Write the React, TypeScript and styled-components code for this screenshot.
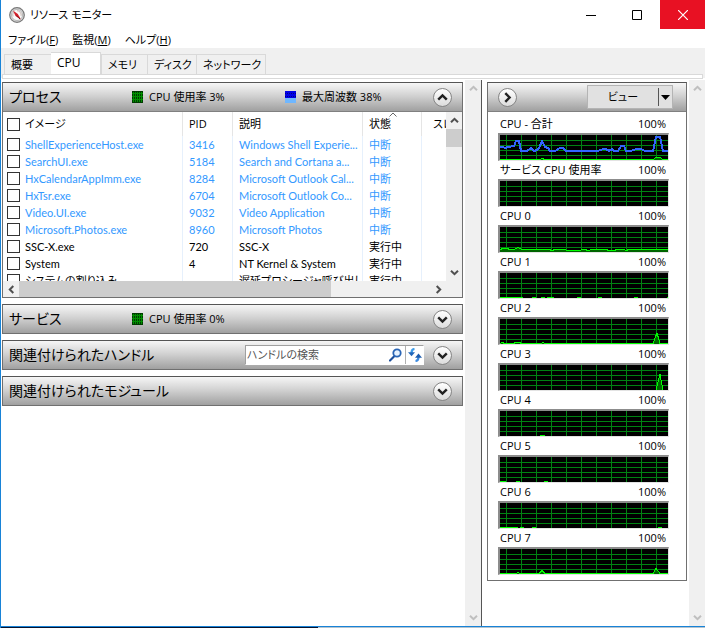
import React from 'react';
import styled, { createGlobalStyle } from 'styled-components';

const GlobalStyle = createGlobalStyle`
  *, *::before, *::after { box-sizing: border-box; }
  body {
    margin: 0;
    background: #ffffff;
    color: #000000;
    font: 11px/16px "Open Sans", "Noto Sans CJK JP", sans-serif;
    font-feature-settings: "palt";
  }
  button, input {
    margin: 0;
    padding: 0;
    font: inherit;
    color: inherit;
    font-feature-settings: inherit;
  }
  h1, h2, p { margin: 0; font: inherit; }
  svg { display: block; flex: none; }
`;

/* Window frame */

const Window = styled.div`
  display: flex;
  flex-direction: column;
  min-height: 100vh;
  border-left: 1px solid #1883d7;
`;

const TitleBar = styled.header`
  display: flex;
  align-items: flex-start;
  gap: 1px;
  height: 31px;
  padding-left: 8px;
`;

const WindowTitle = styled.h1`
  display: flex;
  flex: 1;
  align-items: center;
  gap: 5px;
  height: 29px;
`;

const CaptionButton = styled.button<{ $danger?: boolean }>`
  display: grid;
  place-items: center;
  width: 45px;
  height: 29px;
  border: 0;
  color: ${(p) => (p.$danger ? '#ffffff' : '#000000')};
  background: ${(p) => (p.$danger ? '#e81123' : 'transparent')};
`;

const MenuBar = styled.nav`
  display: flex;
  gap: 14px;
  height: 17px;
  padding-left: 7px;
`;

const MenuButton = styled.button`
  border: 0;
  background: transparent;
  line-height: 17px;
  white-space: nowrap;
`;

const TabStrip = styled.div`
  display: flex;
  align-items: flex-end;
  height: 27px;
  padding: 0 2px 0 3px;
  background: #f0f0f0;
`;

const Tab = styled.button<{ $width: number; $active?: boolean }>`
  width: ${(p) => p.$width}px;
  height: ${(p) => (p.$active ? 23 : 21)}px;
  padding: 0 0 ${(p) => (p.$active ? 2 : 0)}px 6px;
  border: 1px solid #d9d9d9;
  border-right-width: ${(p) => (p.$active ? 1 : 0)}px;
  border-bottom: 0;
  border-left-width: ${(p) => (p.$active ? 0 : 1)}px;
  background: ${(p) => (p.$active ? '#ffffff' : '#f0f0f0')};
  font-size: ${(p) => (p.$active ? 12 : 11)}px;
  line-height: 20px;
  text-align: left;
  white-space: nowrap;
  &:last-child { border-right-width: 1px; }
`;

const TabPageEdge = styled.div`
  height: 4px;
  margin: -1px 0 0;
  padding: 0 2px 0 1px;
  background: #f0f0f0;
  &::before {
    content: "";
    display: block;
    height: 5px;
    border: 1px solid #d9d9d9;
    background: #ffffff;
  }
`;

const Workspace = styled.main`
  display: flex;
  flex: 1;
  padding-top: 2px;
`;

const Details = styled.div`
  display: flex;
  flex: 1;
  flex-direction: column;
  gap: 6px;
  min-width: 0;
  padding: 2px 2px 0 1px;
`;

const Sidebar = styled.aside`
  display: flex;
  flex: none;
  width: 224px;
  border-left: 1px solid #555555;
`;

const SidebarBody = styled.div`
  flex: 1;
  padding: 2px 2px 0 5px;
`;

const BottomEdge = styled.footer`
  height: 2px;
  border-top: 1px solid #1883d7;
  background: linear-gradient(90deg, #06122e 45%, #b4c4d0 45%);
`;

/* Scroll bars */

const ScrollTrack = styled.div<{ $horizontal?: boolean }>`
  display: flex;
  flex: none;
  flex-direction: ${(p) => (p.$horizontal ? 'row' : 'column')};
  ${(p) => (p.$horizontal ? 'height: 16px;' : 'width: 16px;')}
  background: #f0f0f0;
`;

const ScrollButton = styled.button<{ $muted?: boolean }>`
  display: grid;
  flex: none;
  place-items: center;
  width: 16px;
  height: 17px;
  border: 0;
  background: transparent;
  color: ${(p) => (p.$muted ? '#bfbfbf' : '#505050')};
`;

const ScrollRange = styled.div<{ $horizontal?: boolean }>`
  display: flex;
  flex: 1;
  flex-direction: ${(p) => (p.$horizontal ? 'row' : 'column')};
`;

const ScrollThumb = styled.div<{ $share: string }>`
  flex: 0 0 ${(p) => p.$share};
  background: #cdcdcd;
`;

/* Sections */

const Section = styled.section`
  flex: none;
  border: 1px solid #707070;
  border-top-color: #555555;
`;

const SectionHeader = styled.div`
  display: flex;
  align-items: center;
  height: 28px;
  padding: 0 10px 0 6px;
  background: linear-gradient(#f6f6f6, #d2d2d2 45%, #a0a0a0);
`;

const SectionTitle = styled.h2`
  min-width: 123px;
  font-size: 14px;
  line-height: 20px;
  white-space: nowrap;
`;

const Meter = styled.span`
  display: flex;
  flex: none;
  align-items: center;
  gap: 6px;
  width: 153px;
  white-space: nowrap;
  &:nth-of-type(2) { width: auto; }
`;

const Spacer = styled.span`
  flex: 1;
`;

const RoundButton = styled.button`
  display: grid;
  flex: none;
  place-items: center;
  width: 19px;
  height: 19px;
  border: 1px solid #858585;
  border-radius: 50%;
  background: linear-gradient(#ffffff, #dcdcdc);
  color: #222222;
`;

const SearchBox = styled.div`
  display: flex;
  width: 179px;
  height: 20px;
  margin-right: 9px;
  border: 1px solid #a0a0a0;
  border-right-color: #ffffff;
  border-bottom-color: #ffffff;
  background: #ffffff;
`;

const SearchInput = styled.input`
  flex: 1;
  min-width: 0;
  padding-left: 1px;
  border: 0;
  outline: 0;
  background: transparent;
  &::placeholder { color: #555555; opacity: 1; }
`;

const SearchButton = styled.button<{ $divided?: boolean }>`
  display: grid;
  flex: none;
  place-items: center;
  width: ${(p) => (p.$divided ? 18 : 20)}px;
  border: 0;
  border-left: ${(p) => (p.$divided ? '1px solid #b0b0b0' : '0')};
  background: transparent;
`;

/* Process table */

const TableFrame = styled.div`
  border-top: 1px solid #808080;
  background: #ffffff;
`;

const TableArea = styled.div`
  display: flex;
  height: 169px;
`;

const TableClip = styled.div`
  flex: 1;
  min-width: 0;
  overflow: hidden;
`;

const Table = styled.table`
  width: 500px;
  border-collapse: separate;
  border-spacing: 0;
  table-layout: fixed;
`;

const Column = styled.col<{ $width?: number }>`
  ${(p) => (p.$width ? `width: ${p.$width}px;` : '')}
`;

const HeadCell = styled.th`
  position: relative;
  height: 24px;
  padding: 0 6px;
  border-right: 1px solid #e5e5e5;
  font-weight: 400;
  text-align: left;
  white-space: nowrap;
  &:first-child { padding-left: 4px; }
  &:last-child { padding-left: 11px; }
`;

const SortMark = styled.span`
  position: absolute;
  top: 0;
  left: 26px;
`;

const BodyRow = styled.tr<{ $suspended: boolean }>`
  color: ${(p) => (p.$suspended ? '#3399ff' : '#000000')};
`;

const Cell = styled.td`
  height: 17px;
  padding: 0 6px;
  border-right: 1px solid #e6f0fc;
  font-family: Lato, "Noto Sans CJK JP", sans-serif;
  white-space: nowrap;
  &:first-child { padding-left: 4px; }
`;

const CheckLabel = styled.label`
  display: flex;
  align-items: center;
  gap: 5px;
  height: 16px;
`;

const CheckBox = styled.input`
  flex: none;
  width: 13px;
  height: 13px;
  border: 1px solid #333333;
  background: #ffffff;
  appearance: none;
`;

/* Graph panel */

const ViewSplit = styled.div`
  display: flex;
  align-items: center;
  width: 86px;
  height: 24px;
  margin-right: 3px;
  border: 1px solid #b4b4b4;
  background: #e1e1e1;
`;

const ViewButton = styled.button`
  flex: 1;
  border: 0;
  background: transparent;
`;

const ViewMenuButton = styled.button`
  display: grid;
  place-items: center;
  width: 14px;
  height: 18px;
  border: 0;
  border-left: 1px solid #555555;
  background: transparent;
`;

const GraphToggleSlot = styled.span`
  flex: 1;
  padding-left: 4px;
`;

const GraphList = styled.div`
  padding: 3px 17px 5px 10px;
  border-top: 1px solid #808080;
  background: #ffffff;
`;

const GraphCaption = styled.div`
  display: flex;
  justify-content: space-between;
  padding: 0 3px 0 2px;
  line-height: 18px;
  white-space: nowrap;
`;

const GraphFrame = styled.div`
  height: 28px;
  border: 2px solid #8c8c8c;
  border-right: 1px solid #e3e3e3;
  border-bottom: 1px solid #e3e3e3;
  background: #000000;
  svg { width: 100%; height: 100%; }
`;

/* Drawings */

type Direction = 'up' | 'down' | 'left' | 'right';
const turns: Record<Direction, number> = { up: 0, right: 90, down: 180, left: 270 };

const Chevron = ({ to, size = 9, weight = 2 }: { to: Direction; size?: number; weight?: number }) => (
  <svg width={size} height={size} viewBox="0 0 9 9" fill="none" stroke="currentColor" strokeWidth={weight}>
    <path d="M1 6.3 4.5 2.8 8 6.3" transform={`rotate(${turns[to]} 4.5 4.5)`} />
  </svg>
);

const GaugeIcon = () => (
  <svg width="16" height="16" viewBox="0 0 16 16" fill="none">
    <circle cx="8" cy="8" r="7.3" fill="#d9d9d9" stroke="#777777" strokeWidth="1.2" />
    <circle cx="8" cy="8" r="5.5" fill="#fbfbfb" stroke="#aaaaaa" strokeWidth=".8" />
    <path d="M4 9.5A4.3 4.3 0 0 1 5 5M8 3.7a4.3 4.3 0 0 1 4.1 5.1" stroke="#b9a6a0" strokeWidth=".8" />
    <path d="m4 3.6 4.800 3.400L11.800 12 6.500 9Z" fill="#d3202a" />
    <path d="m7.4 8.8 3.8 3.3" stroke="#7c1015" />
  </svg>
);

const MinimizeIcon = () => (
  <svg width="10" height="10" viewBox="0 0 10 10"><path d="M0 5.5h10" stroke="currentColor" /></svg>
);
const MaximizeIcon = () => (
  <svg width="10" height="10" viewBox="0 0 10 10"><path d="M.5.5h9v9h-9z" fill="none" stroke="currentColor" /></svg>
);
const CloseIcon = () => (
  <svg width="10" height="10" viewBox="0 0 10 10"><path d="m0 0 10 10M10 0 0 10" stroke="currentColor" strokeWidth="1.2" /></svg>
);

const UsageSwatch = () => (
  <svg width="11" height="12" viewBox="0 0 11 12" shapeRendering="crispEdges">
    <path fill="#003c00" d="M0 0h11v12H0z" />
    <path
      stroke="#009000"
      d="M1.5 1v10M3.5 1v10M5.5 1v10M7.5 1v10M9.5 1v10M0 2.5h11M0 5.5h11M0 8.5h11"
    />
  </svg>
);

const FrequencySwatch = () => (
  <svg width="11" height="12" viewBox="0 0 11 12" shapeRendering="crispEdges">
    <path fill="#0000e6" d="M0 0h11v8H0z" />
    <path fill="#6fb7ff" d="M0 7h11v5H0z" />
    <path stroke="#000080" strokeDasharray="1 1" d="M0 2.5h11M0 5.5h11" />
  </svg>
);

const SearchIcon = () => (
  <svg width="13" height="14" viewBox="0 0 13 14" fill="none">
    <path d="m5 8.5-4 4" stroke="#1c4f9c" strokeWidth="2.2" strokeLinecap="round" />
    <circle cx="8" cy="5" r="3.7" fill="#e6f2ff" stroke="#2a65b5" strokeWidth="1.8" />
  </svg>
);

const RefreshIcon = () => (
  <svg width="14" height="14" viewBox="0 0 14 14" fill="none">
    <path d="M6.500 1C4.200 1.200 3.500 2.500 3.500 5" stroke="#3d9be8" strokeWidth="2.200" />
    <path d="M0 4.200h7L3.500 8.200Z" fill="#2166ba" />
    <path d="M7.500 13c2.300-.2 3-1.500 3-4" stroke="#3d8be0" strokeWidth="2.200" />
    <path d="M7 9.800h7L10.500 5.600Z" fill="#1d5cae" />
  </svg>
);

const DropIcon = () => (
  <svg width="9" height="5" viewBox="0 0 9 5"><path d="M0 0h9L4.500 5Z" fill="#000000" /></svg>
);

const SortIcon = () => (
  <svg width="8" height="5" viewBox="0 0 8 5"><path d="m.5 4.500 3.500-3.500 3.500 3.500" fill="none" stroke="#666666" /></svg>
);

/* Data */

const processes = [
  ['ShellExperienceHost.exe', '3416', 'Windows Shell Experie...', '中断'],
  ['SearchUI.exe', '5184', 'Search and Cortana a...', '中断'],
  ['HxCalendarAppImm.exe', '8284', 'Microsoft Outlook Cal...', '中断'],
  ['HxTsr.exe', '6704', 'Microsoft Outlook Co...', '中断'],
  ['Video.UI.exe', '9032', 'Video Application', '中断'],
  ['Microsoft.Photos.exe', '8960', 'Microsoft Photos', '中断'],
  ['SSC-X.exe', '720', 'SSC-X', '実行中'],
  ['System', '4', 'NT Kernel & System', '実行中'],
  ['システムの割り込み', '-', '遅延プロシージャ呼び出し', '実行中'],
];

const idle = '0,25.500 168,25.500';

const graphs: { name: string; usage: string; frequency?: string }[] = [
  {
    name: 'CPU - 合計',
    usage: '0,24.500 40,24.500 42,23.500 45,24.500 153,24.500 156,22.500 160,22.500 163,24.500 168,24.500',
    frequency:
      '0,12 3,12 5,13 8,12 14,11 16,6 19,6 21,16 27,16 31,13 34,16 37,15 39,13 42,6 45,12 48,13 50,16 55,16 60,13 63,13 66,16 98,16 103,14 106,14 109,16 112,14 114,16 118,16 121,11 124,11 126,16 130,16 137,14 141,14 145,16 153,16 156,2 160,2 163,16 168,16',
  },
  { name: 'サービス CPU 使用率', usage: idle },
  {
    name: 'CPU 0',
    usage:
      '0,22.500 3,21.500 8,21.500 9,22.500 14,22.500 18,20.500 22,22.500 49,22.500 52,23.500 55,22.500 65,22.500 67,23.500 80,23.500 82,22.500 85,22.500 88,23.500 92,22.500 106,22.500 109,23.500 114,23.500 117,22.500 124,22.500 126,23.500 129,22.500 168,22.500',
  },
  { name: 'CPU 1', usage: '0,24.500 22,24.500 24,25.500 32,25.500 33,24.500 35,24.500 36,25.500 41,25.500 42,24.500 44,24.500 45,25.500 47,25.500 48,24.500 53,24.500 54,25.500 77,25.500 78,24.500 80,24.500 81,25.500 98,25.500 99,24.500 101,24.500 102,25.500 134,25.500 135,24.500 137,24.500 138,25.500 167,25.500 168,24.500' },
  { name: 'CPU 2', usage: '0,24.500 2,23.500 5,24.500 14,24.500 15,23.500 20,23.500 21,24.500 41,24.500 43,23.500 45,24.500 153,24.500 157,14 160,24.500 168,24.500' },
  { name: 'CPU 3', usage: '0,25.500 156,25.500 160,9 163,25.500 168,25.500' },
  { name: 'CPU 4', usage: '0,25.500 40,25.500 41,24.500 44,24.500 45,25.500 168,25.500' },
  { name: 'CPU 5', usage: '0,24.500 5,24.500 6,25.500 16,25.500 17,24.500 19,24.500 20,25.500 44,25.500 45,24.500 47,24.500 48,25.500 168,25.500' },
  { name: 'CPU 6', usage: '0,24.500 17,24.500 18,25.500 20,25.500 21,24.500 23,24.500 24,25.500 32,25.500 33,24.500 35,24.500 36,25.500 158,25.500 159,24.500 161,24.500 162,25.500 168,25.500' },
  { name: 'CPU 7', usage: '0,24.500 16,24.500 18,23.500 20,24.500 39,24.500 42,21.500 45,24.500 153,24.500 156,19.500 160,24.500 168,24.500' },
];

const gridPath =
  Array.from({ length: 11 }, (_, i) => `M${6.5 + i * 15} 0v25`).join('') +
  [5.5, 10.5, 15.5, 20.5].map((y) => `M0 ${y}h168`).join('');

/* Parts */

const VerticalScroll = ({ muted, share }: { muted?: boolean; share?: string }) => (
  <ScrollTrack>
    <ScrollButton $muted={muted} aria-label="上へスクロール"><Chevron to="up" /></ScrollButton>
    <ScrollRange>{share && <ScrollThumb $share={share} />}</ScrollRange>
    <ScrollButton $muted={muted} aria-label="下へスクロール"><Chevron to="down" /></ScrollButton>
  </ScrollTrack>
);

const Graph = ({ name, usage, frequency }: { name: string; usage: string; frequency?: string }) => (
  <div>
    <GraphCaption><span>{name}</span><span>100%</span></GraphCaption>
    <GraphFrame>
      <svg viewBox="0 0 168 25" preserveAspectRatio="none" fill="none" shapeRendering="crispEdges">
        <path d={gridPath} stroke="#008212" />
        <polygon points={`0,25 ${usage} 168,25`} fill="#006400" />
        <polyline points={usage} stroke="#00ff00" />
        {frequency && <polyline points={frequency} stroke="#3264ff" strokeWidth="2" />}
      </svg>
    </GraphFrame>
  </div>
);

const ProcessTable = () => (
  <TableFrame>
    <TableArea>
      <TableClip>
        <Table>
          <colgroup>
            <Column $width={180} />
            <Column $width={50} />
            <Column $width={130} />
            <Column $width={59} />
            <Column />
          </colgroup>
          <thead>
            <tr>
              <HeadCell><CheckLabel><CheckBox type="checkbox" />イメージ</CheckLabel></HeadCell>
              <HeadCell>PID</HeadCell>
              <HeadCell>説明</HeadCell>
              <HeadCell aria-sort="ascending">状態<SortMark><SortIcon /></SortMark></HeadCell>
              <HeadCell>スレッド</HeadCell>
            </tr>
          </thead>
          <tbody>
            {processes.map(([image, pid, description, state]) => (
              <BodyRow key={image} $suspended={state === '中断'}>
                <Cell><CheckLabel><CheckBox type="checkbox" />{image}</CheckLabel></Cell>
                <Cell>{pid}</Cell>
                <Cell>{description}</Cell>
                <Cell>{state}</Cell>
                <Cell />
              </BodyRow>
            ))}
          </tbody>
        </Table>
      </TableClip>
      <VerticalScroll share="13%" />
    </TableArea>
    <ScrollTrack $horizontal>
      <ScrollButton aria-label="左へスクロール"><Chevron to="left" /></ScrollButton>
      <ScrollRange $horizontal><ScrollThumb $share="76%" /></ScrollRange>
      <ScrollButton aria-label="右へスクロール"><Chevron to="right" /></ScrollButton>
      <ScrollButton as="span" />
    </ScrollTrack>
  </TableFrame>
);

const ExpandButton = () => (
  <RoundButton aria-label="展開"><Chevron to="down" size={11} /></RoundButton>
);

export default function App() {
  return (
    <>
      <GlobalStyle />
      <Window>
        <TitleBar>
          <WindowTitle><GaugeIcon />リソース モニター</WindowTitle>
          <CaptionButton aria-label="最小化"><MinimizeIcon /></CaptionButton>
          <CaptionButton aria-label="最大化"><MaximizeIcon /></CaptionButton>
          <CaptionButton $danger aria-label="閉じる"><CloseIcon /></CaptionButton>
        </TitleBar>
        <MenuBar>
          <MenuButton>ファイル(<u>F</u>)</MenuButton>
          <MenuButton>監視(<u>M</u>)</MenuButton>
          <MenuButton>ヘルプ(<u>H</u>)</MenuButton>
        </MenuBar>
        <TabStrip role="tablist">
          <Tab role="tab" $width={47}>概要</Tab>
          <Tab role="tab" $width={50} $active aria-selected>CPU</Tab>
          <Tab role="tab" $width={46}>メモリ</Tab>
          <Tab role="tab" $width={49}>ディスク</Tab>
          <Tab role="tab" $width={70}>ネットワーク</Tab>
        </TabStrip>
        <TabPageEdge />
        <Workspace>
          <Details>
            <Section>
              <SectionHeader>
                <SectionTitle>プロセス</SectionTitle>
                <Meter><UsageSwatch />CPU 使用率 3%</Meter>
                <Meter><FrequencySwatch />最大周波数 38%</Meter>
                <Spacer />
                <RoundButton aria-label="折りたたむ"><Chevron to="up" size={11} /></RoundButton>
              </SectionHeader>
              <ProcessTable />
            </Section>
            <Section>
              <SectionHeader>
                <SectionTitle>サービス</SectionTitle>
                <Meter><UsageSwatch />CPU 使用率 0%</Meter>
                <Spacer />
                <ExpandButton />
              </SectionHeader>
            </Section>
            <Section>
              <SectionHeader>
                <SectionTitle>関連付けられたハンドル</SectionTitle>
                <Spacer />
                <SearchBox>
                  <SearchInput type="text" aria-label="ハンドルの検索" placeholder="ハンドルの検索" />
                  <SearchButton aria-label="検索"><SearchIcon /></SearchButton>
                  <SearchButton $divided aria-label="更新"><RefreshIcon /></SearchButton>
                </SearchBox>
                <ExpandButton />
              </SectionHeader>
            </Section>
            <Section>
              <SectionHeader>
                <SectionTitle>関連付けられたモジュール</SectionTitle>
                <Spacer />
                <ExpandButton />
              </SectionHeader>
            </Section>
          </Details>
          <VerticalScroll muted />
          <Sidebar>
            <SidebarBody>
              <Section>
                <SectionHeader>
                  <GraphToggleSlot>
                    <RoundButton aria-label="グラフを隠す"><Chevron to="right" size={11} /></RoundButton>
                  </GraphToggleSlot>
                  <ViewSplit>
                    <ViewButton>ビュー</ViewButton>
                    <ViewMenuButton aria-label="ビューの選択"><DropIcon /></ViewMenuButton>
                  </ViewSplit>
                </SectionHeader>
                <GraphList>
                  {graphs.map((graph) => <Graph key={graph.name} {...graph} />)}
                </GraphList>
              </Section>
            </SidebarBody>
            <VerticalScroll muted />
          </Sidebar>
        </Workspace>
        <BottomEdge />
      </Window>
    </>
  );
}
